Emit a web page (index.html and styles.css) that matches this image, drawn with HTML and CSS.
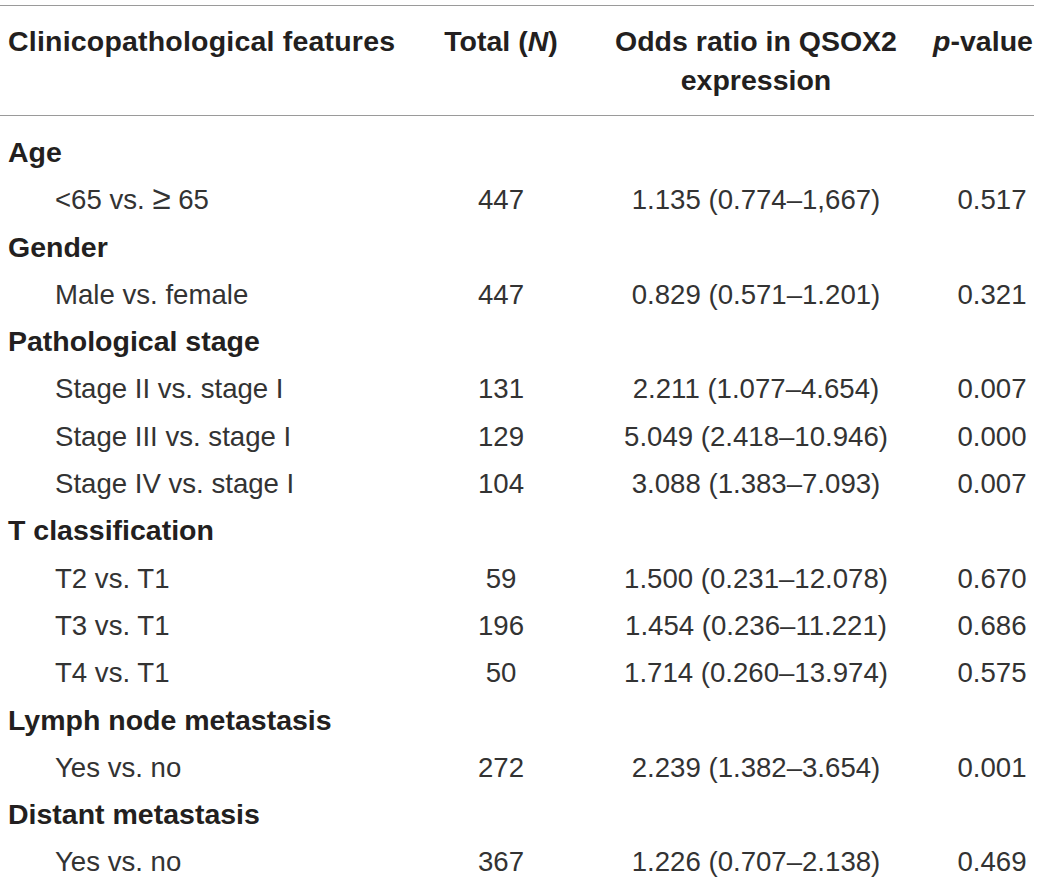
FILE: index.html
```html
<!DOCTYPE html>
<html>
<head>
<meta charset="utf-8">
<link rel="stylesheet" href="styles.css">
</head>
<body>
<div class="table">
  <div class="row head">
    <div class="cell c1">Clinicopathological features</div>
    <div class="cell c2">Total (<i>N</i>)</div>
    <div class="cell c3">Odds ratio in QSOX2<br>expression</div>
    <div class="cell c4 ph"><i>p</i>-value</div>
  </div>
  <div class="tbody">
    <div class="row group"><div class="cell c1">Age</div></div>
    <div class="row"><div class="cell c1 sub">&lt;65 vs. <span class="ge">&ge;</span> 65</div><div class="cell c2">447</div><div class="cell c3">1.135 (0.774–1,667)</div><div class="cell c4">0.517</div></div>
    <div class="row group"><div class="cell c1">Gender</div></div>
    <div class="row"><div class="cell c1 sub">Male vs. female</div><div class="cell c2">447</div><div class="cell c3">0.829 (0.571–1.201)</div><div class="cell c4">0.321</div></div>
    <div class="row group"><div class="cell c1">Pathological stage</div></div>
    <div class="row"><div class="cell c1 sub">Stage II vs. stage I</div><div class="cell c2">131</div><div class="cell c3">2.211 (1.077–4.654)</div><div class="cell c4">0.007</div></div>
    <div class="row"><div class="cell c1 sub">Stage III vs. stage I</div><div class="cell c2">129</div><div class="cell c3">5.049 (2.418–10.946)</div><div class="cell c4">0.000</div></div>
    <div class="row"><div class="cell c1 sub">Stage IV vs. stage I</div><div class="cell c2">104</div><div class="cell c3">3.088 (1.383–7.093)</div><div class="cell c4">0.007</div></div>
    <div class="row group"><div class="cell c1">T classification</div></div>
    <div class="row"><div class="cell c1 sub">T2 vs. T1</div><div class="cell c2">59</div><div class="cell c3">1.500 (0.231–12.078)</div><div class="cell c4">0.670</div></div>
    <div class="row"><div class="cell c1 sub">T3 vs. T1</div><div class="cell c2">196</div><div class="cell c3">1.454 (0.236–11.221)</div><div class="cell c4">0.686</div></div>
    <div class="row"><div class="cell c1 sub">T4 vs. T1</div><div class="cell c2">50</div><div class="cell c3">1.714 (0.260–13.974)</div><div class="cell c4">0.575</div></div>
    <div class="row group"><div class="cell c1">Lymph node metastasis</div></div>
    <div class="row"><div class="cell c1 sub">Yes vs. no</div><div class="cell c2">272</div><div class="cell c3">2.239 (1.382–3.654)</div><div class="cell c4">0.001</div></div>
    <div class="row group"><div class="cell c1">Distant metastasis</div></div>
    <div class="row"><div class="cell c1 sub">Yes vs. no</div><div class="cell c2">367</div><div class="cell c3">1.226 (0.707–2.138)</div><div class="cell c4">0.469</div></div>
  </div>
</div>
</body>
</html>
```

FILE: styles.css
```css
html, body {
  margin: 0;
  padding: 0;
  background: #ffffff;
}
body {
  font-family: "Liberation Sans", Arial, sans-serif;
  color: #2b2b2b;
}
.table {
  width: 1034px;
  margin-top: 5px;
  border-top: 1px solid #9a9a9a;
}
.row {
  display: grid;
  grid-template-columns: 430px 142px 368px 94px;
}
.cell {
  white-space: nowrap;
}
.head {
  border-bottom: 1px solid #9a9a9a;
  padding: 16px 0 15px;
  font-weight: bold;
  font-size: 28.5px;
  line-height: 39px;
  color: #231f20;
}
.head .c1 {
  padding-left: 8px;
  letter-spacing: 0.2px;
}
.head .c2, .head .c3, .head .c4 {
  text-align: center;
}
.head .ph {
  margin-left: -8px;
}
.tbody {
  padding-top: 13px;
}
.tbody .row {
  height: 47.3px;
  line-height: 47.3px;
  font-size: 27.6px;
  color: #333333;
}
.tbody .group {
  font-weight: bold;
  font-size: 28.5px;
  color: #231f20;
}
.tbody .c1 {
  padding-left: 8px;
}
.tbody .sub {
  padding-left: 55px;
}
.tbody .c2, .tbody .c3, .tbody .c4 {
  text-align: center;
}
.tbody .c4 {
  padding-left: 10px;
}
.ge {
  font-size: 1.2em;
  line-height: 0;
}
```
